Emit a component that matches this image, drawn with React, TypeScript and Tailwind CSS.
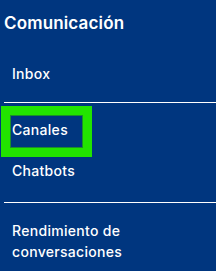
export default function App() {
  return (
    <div className="w-[216px] h-[271px] bg-[#00367f] text-white overflow-hidden font-['Inter',sans-serif]">
      <div className="pt-[13px] pl-[4px] text-[17px] leading-[20px] font-semibold tracking-[0.15px]">Comunicación</div>

      <div className="mt-[31px] pl-[12px] text-[14px] leading-[20px] font-medium tracking-[0.3px]">Inbox</div>

      <div className="mt-[18px] ml-[4px] h-px bg-white" />

      <div className="mt-[3px] ml-[1px] w-[91px] h-[51px] border-[9px] border-[#22e400] shadow-[inset_0_0_0_1px_#1b8f2a]">
        <div className="pt-[5px] pl-[2px] text-[14px] leading-[20px] font-medium tracking-[0.3px]">Canales</div>
      </div>

      <div className="mt-[4px] pl-[12px] text-[14px] leading-[20px] font-medium tracking-[0.3px]">Chatbots</div>

      <div className="mt-[21px] ml-[4px] h-px bg-white" />

      <div className="mt-[17px] pl-[12px] text-[14px] leading-[21px] font-medium tracking-[0.3px]">
        Rendimiento de
        <br />
        conversaciones
      </div>
    </div>
  );
}
